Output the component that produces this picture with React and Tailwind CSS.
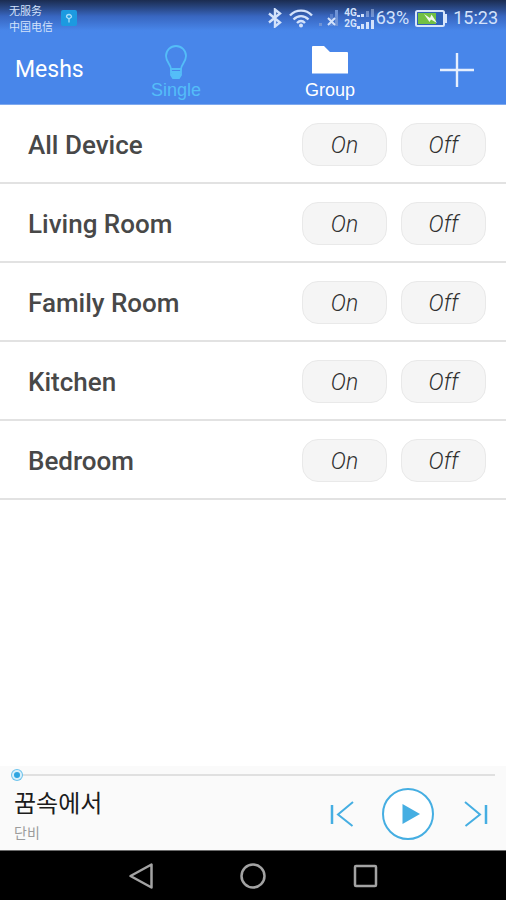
import { useState } from "react";

const rooms = ["All Device", "Living Room", "Family Room", "Kitchen", "Bedroom"];

const StatusBar = () => {
  return (
    <div
      className="flex h-9 items-center justify-between pl-[9px] pr-2 text-[#d3e2fb]
                bg-linear-to-b from-[#1b2c50] via-[#3866c0] via-45% to-[#4886ea] to-85%"
    >
      <div className="flex items-center gap-2">
        <div className="text-[11px] leading-4 font-['Noto_Sans_CJK_SC',sans-serif]">
          <p>无服务</p>
          <p>中国电信</p>
        </div>
        <svg width="16" height="16" viewBox="0 0 16 16" fill="none">
          <rect width="16" height="16" rx="2" fill="#1c9ae0" />
          <path d="M8 12.500V9L5.500 7a2.500 2.500 0 1 1 5 0L8 9" stroke="#a5dcfa" strokeWidth="1.3" />
        </svg>
      </div>

      <div className="flex items-center">
        <svg width="16" height="20" viewBox="0 0 16 20" fill="none" stroke="currentColor" strokeWidth="2.4">
          <path d="M1 5.500l11 9-5 4V1.500l5 4L1 14.500" />
        </svg>
        <svg className="ml-1" width="26" height="20" viewBox="0 0 26 20" fill="none" stroke="currentColor" strokeWidth="2.4">
          <path d="M2 7.500c6-6.500 16-6.500 22 0M5.500 11.500c4.500-4.500 10.500-4.500 15 0M9 15c2.500-2.500 5.500-2.500 8 0" />
          <circle cx="13" cy="17.500" r="2" fill="currentColor" stroke="none" />
        </svg>
        <svg className="ml-1" width="22" height="20" viewBox="0 0 22 20" fill="#6f93d6">
          <path d="M1 15h3v3H1zM17 2h3v16h-3z" />
          <path d="M12 6h3v12h-3z" opacity=".6" />
          <path d="M10 10l7 7M17 10l-7 7" stroke="#d3e2fb" strokeWidth="2" />
        </svg>
        <div className="ml-1 flex flex-col text-[10px] leading-[11px] font-bold">
          <div className="flex items-end">
            4G
            <svg width="17" height="10" viewBox="0 0 17 10" fill="currentColor">
              <path d="M0 7h3v2H0zM4 6h3v3H4z" />
              <path d="M9 3h3v6H9zM14 1h3v8h-3z" opacity=".4" />
            </svg>
          </div>
          <div className="flex items-end">
            2G
            <svg width="17" height="10" viewBox="0 0 17 10" fill="currentColor">
              <path d="M0 7h3v3H0zM4 5h3v5H4zM9 3h3v7H9zM14 1h3v9h-3z" />
            </svg>
          </div>
        </div>
        <span className="ml-0.5 text-lg">63%</span>
        <svg className="ml-1.5" width="32" height="17" viewBox="0 0 32 17">
          <rect x="1" y="1" width="28" height="15" rx="1.5" fill="#2f62b8" stroke="#d8e6fb" strokeWidth="2" />
          <rect x="3" y="3" width="18" height="11" fill="#72c043" />
          <path d="M9 4l6 4 1.500-3.500L22 13l-6-3.500L14.500 12z" fill="#f2f8ee" />
          <path d="M30 4h2v9h-2z" fill="#d8e6fb" />
        </svg>
        <span className="ml-1.5 text-lg">15:23</span>
      </div>
    </div>
  );
};

const Header = ({ tab, setTab }) => {
  return (
    <header className="bg-[#4886ea] border-b border-[#7fa9ee]">
      <StatusBar />
      <div className="grid h-17 grid-cols-[99px_1fr_1fr_99px] items-center">
        <h1 className="pl-[15px] text-[23px] text-white">Meshs</h1>

        <button
          type="button"
          aria-pressed={tab === "single"}
          onClick={() => setTab("single")}
          className="flex flex-col items-center pt-1 text-[#54bdf8] font-['Liberation_Sans',sans-serif]"
        >
          <svg width="24" height="36" viewBox="0 0 24 36" fill="none" stroke="currentColor" strokeWidth="1.8">
            <path d="M7 25c0-4-5-7-5-13a10 10 0 0 1 20 0c0 6-5 9-5 13z" />
            <path d="M7 25h10v6l-2 3H9l-2-3zM7 28h10M7 31h10" />
            <path d="M8 29h8v2l-2 4h-4l-2-4z" fill="currentColor" stroke="none" />
          </svg>
          <span className="text-lg leading-5">Single</span>
        </button>

        <button
          type="button"
          aria-pressed={tab === "group"}
          onClick={() => setTab("group")}
          className="flex flex-col items-center pt-1 text-white font-['Liberation_Sans',sans-serif]"
        >
          <svg width="36" height="36" viewBox="0 0 36 36" fill="currentColor">
            <path d="M0 3Q0 2 1 2H12L18 8H35Q36 8 36 9V29.500H0z" />
          </svg>
          <span className="text-lg leading-5">Group</span>
        </button>

        <button type="button" aria-label="Add" className="flex justify-center">
          <svg width="34" height="34" viewBox="0 0 34 34" stroke="#e6effd" strokeWidth="2.4">
            <path d="M17 0v34M0 17h34" />
          </svg>
        </button>
      </div>
    </header>
  );
};

const SwitchButton = ({ label, onClick }) => {
  return (
    <button
      type="button"
      onClick={onClick}
      className="h-[43px] w-[85px] rounded-2xl border border-[#e9e9e9] bg-[#f5f5f5] pt-1
                text-[23px] font-light italic text-[#303030]"
    >
      {label}
    </button>
  );
};

const RoomRow = ({ name }) => {
  const [, setIsOn] = useState(false);

  return (
    <li className="flex h-[79px] items-center justify-between border-b-2 border-[#e2e2e2] pl-7 pr-5 pt-0.5">
      <span className="pt-0.5 text-[26px] font-medium text-[#484848]">{name}</span>
      <div className="flex gap-3.5">
        <SwitchButton label="On" onClick={() => setIsOn(true)} />
        <SwitchButton label="Off" onClick={() => setIsOn(false)} />
      </div>
    </li>
  );
};

const Player = () => {
  const [position, setPosition] = useState(0);

  return (
    <section className="bg-[#fafafa] pt-1 pb-1.5">
      <div className="flex h-2.5 items-center pl-3 pr-[11px]">
        <input
          type="range"
          aria-label="Position"
          value={position}
          onChange={(e) => setPosition(e.target.value)}
          className="w-full appearance-none bg-transparent
                    [&::-webkit-slider-runnable-track]:h-0.5
                    [&::-webkit-slider-runnable-track]:bg-[#e0e0e0]
                    [&::-webkit-slider-thumb]:-mt-1
                    [&::-webkit-slider-thumb]:size-2.5
                    [&::-webkit-slider-thumb]:appearance-none
                    [&::-webkit-slider-thumb]:rounded-full
                    [&::-webkit-slider-thumb]:border-2
                    [&::-webkit-slider-thumb]:border-[#d9f0fb]
                    [&::-webkit-slider-thumb]:bg-[#2fa5e0]
                    [&::-webkit-slider-thumb]:ring-1
                    [&::-webkit-slider-thumb]:ring-[#6cc3ec]"
        />
      </div>

      <div className="flex items-center justify-between pl-3.5 pr-[18px] pt-1">
        <div className="font-['Noto_Sans_CJK_KR',sans-serif]">
          <p className="text-2xl leading-9 text-[#1c1c1c]">꿈속에서</p>
          <p className="text-sm leading-6 text-[#9c9c9c]">단비</p>
        </div>

        <div className="flex items-center gap-7 text-[#45aee2]">
          <button type="button" aria-label="Previous">
            <svg width="26" height="26" viewBox="0 0 26 26" fill="none" stroke="currentColor" strokeWidth="2">
              <path d="M4 4v19" strokeWidth="2.5" />
              <path d="M25 1L10 13.500L24.500 25" />
            </svg>
          </button>
          <button type="button" aria-label="Play">
            <svg width="52" height="52" viewBox="0 0 52 52">
              <circle cx="26" cy="26" r="25" fill="#fff" stroke="currentColor" strokeWidth="2" />
              <path d="M20.500 16L38 26L20.500 36z" fill="currentColor" />
            </svg>
          </button>
          <button type="button" aria-label="Next">
            <svg width="26" height="26" viewBox="0 0 26 26" fill="none" stroke="currentColor" strokeWidth="2">
              <path d="M24 4v19" strokeWidth="2.5" />
              <path d="M3 1L18 13.500L3.500 25" />
            </svg>
          </button>
        </div>
      </div>
    </section>
  );
};

const NavBar = () => {
  return (
    <nav className="flex h-[50px] items-center justify-center gap-[86px] border-t border-[#6b6b6b] bg-black text-[#a3a3a3]">
      <button type="button" aria-label="Back">
        <svg width="26" height="28" viewBox="0 0 26 28" fill="none" stroke="currentColor" strokeWidth="2.5">
          <path d="M23.500 2.500v23L2.500 14z" strokeLinejoin="round" />
        </svg>
      </button>
      <button type="button" aria-label="Home">
        <svg width="26" height="28" viewBox="0 0 26 28" fill="none" stroke="currentColor" strokeWidth="2.5">
          <circle cx="13" cy="14" r="11.5" />
        </svg>
      </button>
      <button type="button" aria-label="Recent apps">
        <svg width="26" height="28" viewBox="0 0 26 28" fill="none" stroke="currentColor" strokeWidth="2.5">
          <rect x="3" y="4" width="21" height="20" rx="1" />
        </svg>
      </button>
    </nav>
  );
};

const App = () => {
  const [tab, setTab] = useState("single");

  return (
    <div className="flex min-h-screen flex-col bg-white font-['Roboto',sans-serif]">
      <Header tab={tab} setTab={setTab} />
      <main className="flex-1">
        <ul>
          {rooms.map((name) => (
            <RoomRow key={name} name={name} />
          ))}
        </ul>
      </main>
      <Player />
      <NavBar />
    </div>
  );
};

export default App;
